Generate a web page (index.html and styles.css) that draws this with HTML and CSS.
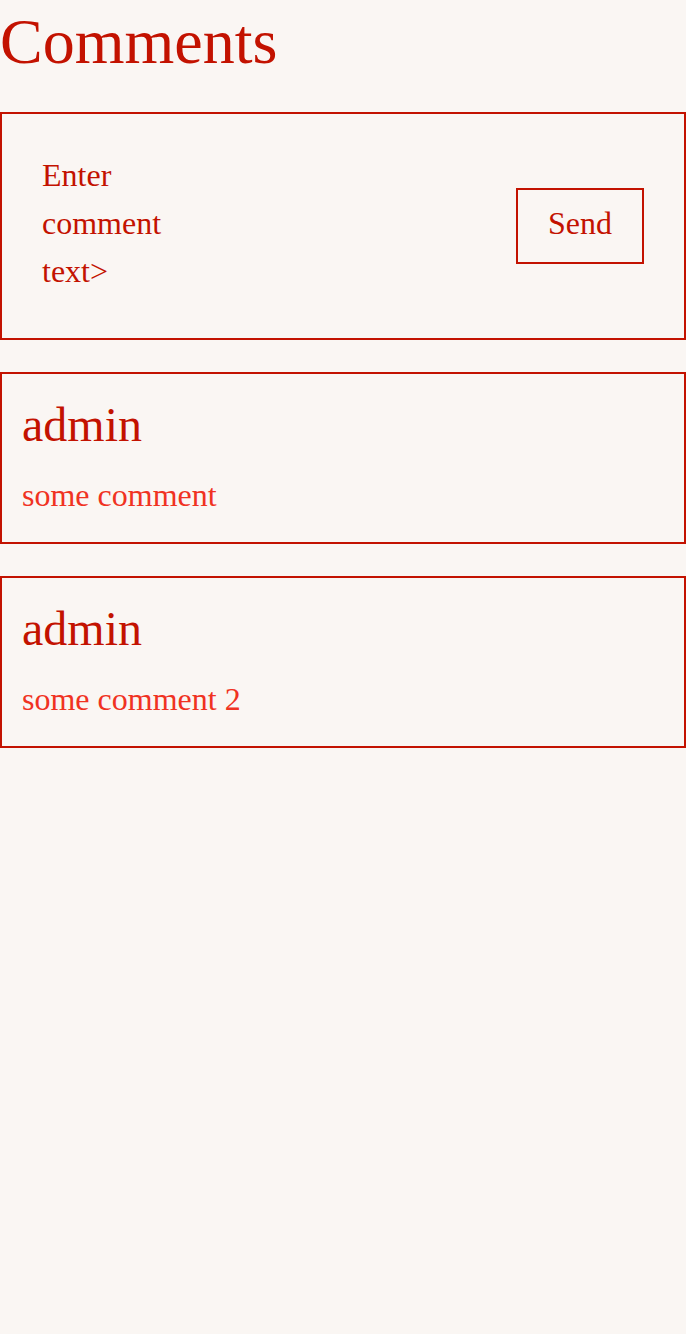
FILE: index.html
```html
<!DOCTYPE html>
<html lang="en">
<head>
<meta charset="utf-8">
<title>Comments</title>
<link rel="stylesheet" href="styles.css">
</head>
<body>
<h1 class="title">Comments</h1>
<form class="composer">
  <div class="composer-input">Enter comment text&gt;</div>
  <button type="button" class="send">Send</button>
</form>
<div class="comment">
  <div class="author">admin</div>
  <div class="body">some comment</div>
</div>
<div class="comment">
  <div class="author">admin</div>
  <div class="body">some comment 2</div>
</div>
</body>
</html>
```
FILE: styles.css
```css
html, body {
  margin: 0;
  padding: 0;
  background: #faf6f3;
}
body {
  font-family: "Liberation Serif", "Times New Roman", serif;
  color: #c31200;
}
.title {
  margin: 0 0 28px 0;
  font-size: 64px;
  font-weight: normal;
  line-height: 84px;
  color: #c31200;
}
.composer {
  display: flex;
  align-items: center;
  justify-content: space-between;
  border: 2px solid #c31200;
  padding: 37px 40px;
  margin: 0 0 32px 0;
}
.composer-input {
  width: 160px;
  padding-bottom: 6px;
  font-size: 32px;
  line-height: 48px;
  color: #c31200;
}
.send {
  font-family: "Liberation Serif", "Times New Roman", serif;
  font-size: 32px;
  line-height: 40px;
  color: #c31200;
  background: transparent;
  border: 2px solid #c31200;
  padding: 13px 30px 19px 30px;
  margin: 0;
  border-radius: 0;
}
.comment {
  border: 2px solid #c31200;
  padding: 20px 20px 23px 20px;
  margin: 0 0 32px 0;
}
.author {
  font-size: 48px;
  line-height: 62px;
  color: #c31200;
}
.body {
  margin-top: 15px;
  font-size: 32px;
  line-height: 48px;
  color: #f03222;
}
```
